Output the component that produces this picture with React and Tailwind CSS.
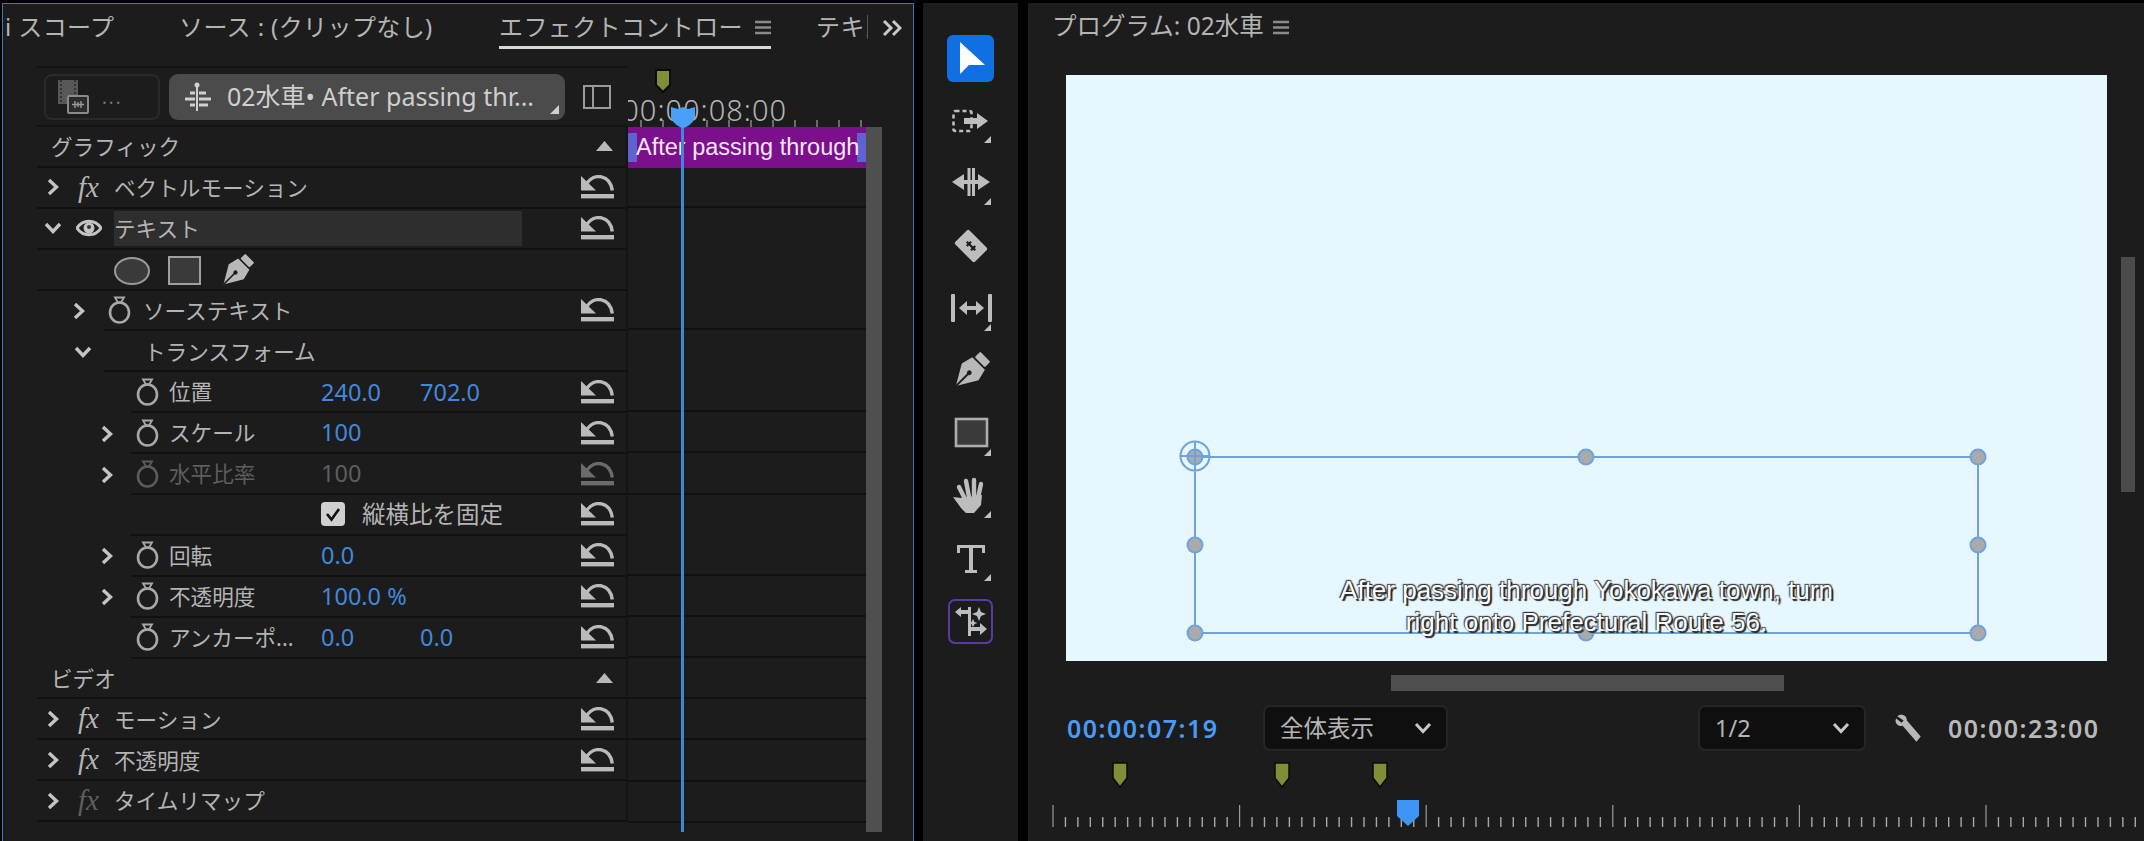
import React from 'react';

const gray = '#bababa';

const Chevron = ({ open = false }) => (
  <svg width="18" height="18" viewBox="0 0 18 18" className="shrink-0">
    <path d={open ? 'M2 5 L9 12.5 L16 5' : 'M5 2 L12.5 9 L5 16'} fill="none" stroke="#c4c4c4" strokeWidth="3.4" />
  </svg>
);

const ResetIcon = ({ dim = false }) => (
  <svg width="33" height="24" viewBox="0 0 33 24" className="shrink-0" opacity={dim ? 0.5 : 1}>
    <path d="M0 1 L0 15.5 L15 15.5 Z" fill={gray} />
    <path d="M6 8 C13 -2 29 -1 31.3 15.5" fill="none" stroke={gray} strokeWidth="3.4" />
    <rect x="0" y="19" width="33" height="4.4" fill={gray} />
  </svg>
);

const Stopwatch = ({ dim = false }) => (
  <svg width="23" height="28" viewBox="0 0 23 28" className="shrink-0" opacity={dim ? 0.45 : 1}>
    <ellipse cx="11.5" cy="16.5" rx="9.5" ry="10" fill="none" stroke="#a8a8a8" strokeWidth="2.6" />
    <path d="M7 1.5 H16 L13 6.5 H10 Z" fill="none" stroke="#a8a8a8" strokeWidth="1.8" />
  </svg>
);

const Fx = ({ dim = false }) => (
  <span className={`w-[38px] shrink-0 font-['Liberation_Serif',serif] italic text-[29px] leading-none ${dim ? 'text-[#5f5f5f]' : 'text-[#b4b4b4]'}`}>fx</span>
);

const Eye = () => (
  <svg width="26" height="18" viewBox="0 0 26 18" className="mr-[12px] shrink-0">
    <path d="M1 9 C7 0 19 0 25 9 C19 18 7 18 1 9 Z" fill="none" stroke="#c4c4c4" strokeWidth="3" />
    <circle cx="13" cy="9" r="5.5" fill="#c4c4c4" />
    <circle cx="13" cy="8" r="2" fill="#333" />
  </svg>
);

const Triangle = () => (
  <svg width="17" height="10" viewBox="0 0 17 10" className="shrink-0">
    <path d="M8.5 0 L17 10 L0 10 Z" fill="#b8b8b8" />
  </svg>
);

const Menu = () => (
  <svg width="16" height="15" viewBox="0 0 16 15" className="shrink-0">
    <path d="M0 2 H16 M0 7.5 H16 M0 13 H16" stroke="#8a8a8a" strokeWidth="2.4" />
  </svg>
);

const PenShape = ({ size = 34 }) => (
  <svg width={size} height={size} viewBox="0 0 32 32" className="shrink-0">
    <g transform="rotate(45 16 16)">
      <rect x="10" y="-1" width="12" height="6.5" rx="1" fill="#b8b8b8" />
      <path d="M8.5 7 H23.5 L26 17 L16 34 L6 17 Z" fill="#b8b8b8" />
      <path d="M16 19 V34" stroke="#1c1c1c" strokeWidth="1.6" />
      <circle cx="16" cy="18" r="2" fill="#1c1c1c" />
    </g>
  </svg>
);

// one line of the effect list; the gutter sits left of the separator
const Row = ({ gutter, reset, dim, children }) => (
  <div className="flex h-[40.9px]">
    {gutter}
    <div className="flex flex-1 items-center border-b-2 border-[#111111]">
      {children}
      {reset && (
        <div className="ml-auto mr-[12px]">
          <ResetIcon dim={dim} />
        </div>
      )}
    </div>
  </div>
);

const Gutter1 = ({ open }) => (
  <div className={`flex w-[67px] shrink-0 items-center ${open ? 'pl-[37px]' : 'pl-[33px]'}`}>
    <Chevron open={open} />
  </div>
);

const Gutter2 = ({ show = true }) => (
  <div className="flex w-[94px] shrink-0 items-center pl-[61px]">{show && <Chevron />}</div>
);

const Label = ({ children, dim, className = '' }) => (
  <span className={`whitespace-nowrap pt-px text-[21.6px] leading-none ${dim ? 'text-[#5e5e5e]' : 'text-[#b4b4b4]'} ${className}`}>{children}</span>
);

const Val = ({ children, dim, className = '' }) => (
  <span className={`whitespace-nowrap pt-px text-[23.5px] leading-none ${dim ? 'text-[#5e5e5e]' : 'text-[#4288dd]'} ${className}`}>{children}</span>
);

const SectionRow = ({ title }) => (
  <Row>
    <Label className="ml-[14px]">{title}</Label>
    <div className="ml-auto mr-[13px]">
      <Triangle />
    </div>
  </Row>
);

const FxRow = ({ title, reset = true, dimFx }) => (
  <Row reset={reset}>
    <div className="flex w-[41px] shrink-0 pl-[7px]">
      <Chevron />
    </div>
    <Fx dim={dimFx} />
    <Label className="-ml-[2px]">{title}</Label>
  </Row>
);

const PropRow = ({ chevron = true, title, dim, v1, v2 }) => (
  <Row gutter={<Gutter2 show={chevron} />} reset dim={dim}>
    <div className="ml-[5px] flex items-center">
      <Stopwatch dim={dim} />
    </div>
    <Label dim={dim} className="ml-[10px] w-[152px]">{title}</Label>
    {v1 && <Val dim={dim} className="w-[99px]">{v1}</Val>}
    {v2 && <Val>{v2}</Val>}
  </Row>
);

const EffectList = () => (
  <div className="w-[591px] shrink-0 border-r-2 border-[#141414]">
    <SectionRow title="グラフィック" />
    <FxRow title="ベクトルモーション" />
    <Row reset>
      <div className="flex w-[39px] shrink-0 pl-[7px]">
        <Chevron open />
      </div>
      <Eye />
      <div className="flex h-[35px] w-[408px] items-center bg-[#2e2e2e]">
        <Label>テキスト</Label>
      </div>
    </Row>
    <Row>
      <div className="ml-[77px] mt-[3px] flex items-center">
        <div className="h-[28px] w-[36px] rounded-[50%] border-[2.5px] border-[#9a9a9a] bg-[#3a3a3a]" />
        <div className="ml-[18px] h-[29px] w-[33px] border-[2.5px] border-[#a0a0a0] bg-[#3a3a3a]" />
        <div className="ml-[19px]">
          <PenShape />
        </div>
      </div>
    </Row>
    <Row gutter={<Gutter1 />} reset>
      <div className="ml-[4px] flex items-center">
        <Stopwatch />
      </div>
      <Label className="ml-[12px]">ソーステキスト</Label>
    </Row>
    <Row gutter={<Gutter1 open />}>
      <Label className="ml-[40px]">トランスフォーム</Label>
    </Row>
    <PropRow chevron={false} title="位置" v1="240.0" v2="702.0" />
    <PropRow title="スケール" v1="100" />
    <PropRow title="水平比率" v1="100" dim />
    <Row gutter={<Gutter2 show={false} />} reset>
      <div className="ml-[190px] flex h-[24px] w-[24px] items-center justify-center rounded-[4px] bg-[#cfcfcf]">
        <svg width="16" height="15" viewBox="0 0 16 15">
          <path d="M2 7 L6.5 12.5 L14 2" fill="none" stroke="#111" strokeWidth="2.6" />
        </svg>
      </div>
      <span className="ml-[17px] whitespace-nowrap text-[23.5px] leading-none text-[#b4b4b4]">縦横比を固定</span>
    </Row>
    <PropRow title="回転" v1="0.0" />
    <PropRow title="不透明度" v1="100.0 %" />
    <PropRow chevron={false} title="アンカーポ..." v1="0.0" v2="0.0" />
    <SectionRow title="ビデオ" />
    <FxRow title="モーション" />
    <FxRow title="不透明度" />
    <FxRow title="タイムリマップ" reset={false} dimFx />
  </div>
);

const laneHeights = ['h-[40px]', 'h-[122px]', 'h-[82px]', 'h-[41px]', 'h-[42px]', 'h-[81px]', 'h-[41px]', 'h-[41px]', 'h-[41px]', 'h-[41px]', 'h-[42px]', 'h-[41px]'];

const Lanes = () => (
  <div className="relative w-[238px] shrink-0">
    <div className="relative flex h-[41px] items-center overflow-hidden bg-[#7b0f8c]">
      <div className="absolute left-0 top-[6px] h-[29px] w-[9px] bg-[#5f63cf]" />
      <div className="absolute right-0 top-[6px] h-[29px] w-[9px] bg-[#5f63cf]" />
      <span className="relative ml-[8px] whitespace-nowrap font-['Liberation_Sans',sans-serif] text-[23.5px] leading-none text-[#f4e6f6]">After passing through</span>
    </div>
    {laneHeights.map((h, i) => (
      <div key={i} className={`${h} border-b-2 border-[#111111]`} />
    ))}
  </div>
);

const Tabs = () => (
  <div className="flex h-[62px] items-start text-[24px] leading-none tracking-[0.4px] text-[#b4b4b4]">
    <span className="mt-[11px] w-[176px] whitespace-nowrap pl-[2px]">i スコープ</span>
    <span className="mt-[11px] w-[320px] whitespace-nowrap">ソース : (クリップなし)</span>
    <div className="flex h-[45px] w-[272px] items-start border-b-[3px] border-[#d8d8d8] pt-[11px]">
      <span className="w-[245px] overflow-hidden whitespace-nowrap">エフェクトコントロール</span>
      <div className="ml-[12px] mt-[5px]">
        <Menu />
      </div>
    </div>
    <span className="ml-[45px] mt-[11px] w-[52px] overflow-hidden whitespace-nowrap border-r border-[#555]">テキスト</span>
    <svg width="20" height="18" viewBox="0 0 20 18" className="ml-[14px] mt-[15px]">
      <path d="M2 2 L9 9 L2 16 M11 2 L18 9 L11 16" fill="none" stroke="#c8c8c8" strokeWidth="3" />
    </svg>
  </div>
);

const ChipHeader = () => (
  <div className="flex h-[61px] w-[591px] shrink-0 items-center border-y-2 border-[#141414] pl-[7px]">
    <div className="flex h-[46px] w-[116px] items-center rounded-[8px] border-2 border-[#2a2a2a] pl-[11px]">
      <svg width="32" height="36" viewBox="0 0 32 36">
        <rect x="1" y="1" width="20" height="24" fill="#585858" />
        <path d="M4 1 V25 M18 1 V25" stroke="#2a2a2a" strokeWidth="1.5" strokeDasharray="2 2" />
        <rect x="11" y="17" width="20" height="17" rx="1" fill="#2b2b2b" stroke="#8a8a8a" strokeWidth="2" />
        <path d="M15 25.5 H27 M18 22 V29 M21 23 V28 M24 22 V29" stroke="#9a9a9a" strokeWidth="1.4" />
      </svg>
      <span className="ml-[13px] text-[18px] leading-none tracking-[2px] text-[#777]">...</span>
    </div>
    <div className="relative ml-[9px] flex h-[46px] w-[396px] items-center rounded-[9px] bg-[#4b4b4b] pl-[15px]">
      <svg width="28" height="30" viewBox="0 0 28 30">
        <path d="M13 3 V29" stroke="#d0d0d0" strokeWidth="2" />
        <circle cx="13" cy="3" r="2.5" fill="#d0d0d0" />
        <path d="M6 11 H11 M15 11 H22 M1 17 H11 M15 17 H27 M6 23 H11 M15 23 H24" stroke="#d0d0d0" strokeWidth="3" />
      </svg>
      <span className="ml-[15px] whitespace-nowrap text-[25px] leading-none text-[#cfcfcf]">02水車• After passing thr...</span>
      <svg width="9" height="9" viewBox="0 0 9 9" className="absolute bottom-[6px] right-[6px]">
        <path d="M9 0 V9 H0 Z" fill="#d0d0d0" />
      </svg>
    </div>
    <div className="ml-[18px] flex h-[24px] w-[28px] border-2 border-[#9a9a9a]">
      <div className="w-[9px] border-r-2 border-[#9a9a9a]" />
    </div>
  </div>
);

const timelineTicks = Array.from({ length: 11 }, (_, i) => 13 + i * 22);

const TimelineHeader = () => (
  <div className="relative h-[61px] w-[238px] overflow-hidden">
    <span className="absolute bottom-[3px] right-[79px] whitespace-nowrap text-[29px] font-light leading-none tracking-[1px] text-[#b4b4b4]">00:00:08:00</span>
    <svg width="238" height="8" viewBox="0 0 238 8" className="absolute bottom-0 left-0">
      {timelineTicks.map((x) => (
        <path key={x} d={`M${x} 1 V8`} stroke="#8f8f8f" strokeWidth="1.4" />
      ))}
    </svg>
  </div>
);

const Corner = () => <path d="M44 39 V46 H37 Z" fill="#c0c0c0" />;

const icon = (children) => (
  <svg width="48" height="48" viewBox="0 0 48 48">
    {children}
  </svg>
);

const toolIcons = [
  <div key="select" className="flex h-[47px] w-[47px] items-center justify-center rounded-[6px] bg-[#0f6fe3]">
    <svg width="30" height="34" viewBox="0 0 30 34">
      <path d="M4 1 L29 24 L13 24 L4 33 Z" fill="#ffffff" />
    </svg>
  </div>,
  icon(
    <g key="track">
      <rect x="6.5" y="14" width="18" height="20" rx="2" fill="none" stroke="#bdbdbd" strokeWidth="2.6" strokeDasharray="4 3" />
      <path d="M17 21 H30 V16 L41 24 L30 32 V27 H17 Z" fill="#bdbdbd" />
      <Corner />
    </g>
  ),
  icon(
    <g key="ripple">
      <path d="M5 23 L17 15 V21 H31 V15 L43 23 L31 31 V25 H17 V31 Z" fill="#bdbdbd" />
      <rect x="20.5" y="9" width="3" height="28" fill="#bdbdbd" />
      <rect x="25" y="9" width="3" height="28" fill="#bdbdbd" />
      <Corner />
    </g>
  ),
  icon(
    <g key="razor" transform="rotate(45 24 24)">
      <rect x="10" y="14" width="28" height="20" rx="2" fill="#bdbdbd" />
      <path d="M18 24 H30 M21 21 V27 M27 21 V27" stroke="#1c1c1c" strokeWidth="2.2" />
    </g>
  ),
  icon(
    <g key="slip">
      <rect x="4" y="9" width="4" height="28" rx="1" fill="#bdbdbd" />
      <rect x="41" y="9" width="4" height="28" rx="1" fill="#bdbdbd" />
      <path d="M12 23 L20 16 V21 H29 V16 L37 23 L29 30 V25 H20 V30 Z" fill="#bdbdbd" />
      <Corner />
    </g>
  ),
  <PenShape key="pen" size={38} />,
  icon(
    <g key="rect">
      <rect x="9" y="9" width="31" height="27" fill="#3a3a3a" stroke="#adadad" strokeWidth="2.6" />
      <Corner />
    </g>
  ),
  icon(
    <g key="hand">
      <path d="M12 15 L18 27 M19 9 L22 25 M27 8 L27 25 M34 12 L31 26" stroke="#bdbdbd" strokeWidth="4.4" strokeLinecap="round" />
      <path d="M6 25 L15 26 L35 23 L34 33 L27 41 H19 L14 36 Z" fill="#bdbdbd" />
      <Corner />
    </g>
  ),
  icon(
    <g key="type">
      <path d="M10 10 H38 V18 H35 V13 H26 V35 H30 V38 H18 V35 H22 V13 H13 V18 H10 Z" fill="#bdbdbd" />
      <Corner />
    </g>
  ),
  <div key="gen" className="flex h-[45px] w-[45px] items-center justify-center rounded-[7px] border-2 border-[#5b3aa6]">
    <svg width="34" height="32" viewBox="0 0 34 32">
      <path d="M1 6 L7 1 V4 H15 V8 H7 V11 Z M14 1 H17 V30 H14 Z M17 21 H26 V17 L33 23 L26 29 V25 H17 Z" fill="#bdbdbd" />
      <path d="M25 1 L27 6 L32 8 L27 10 L25 15 L23 10 L18 8 L23 6 Z M19 13 L20.5 16 L23.5 17 L20.5 18 L19 21 L17.5 18 L14.5 17 L17.5 16 Z" fill="#bdbdbd" />
    </svg>
  </div>,
];

const Tools = () => (
  <div className="flex w-[95px] shrink-0 flex-col items-center bg-[#1c1c1c] pt-[24px]">
    {toolIcons.map((t, i) => (
      <div key={i} className="flex h-[62.6px] w-full items-center justify-center">
        {t}
      </div>
    ))}
  </div>
);

const handles = [
  [12, 12], [403, 12], [795, 12],
  [12, 100], [795, 100],
  [12, 188], [403, 188], [795, 188],
];

const Dropdown = ({ label, className }) => (
  <div className={`flex h-[46px] items-center justify-between rounded-[7px] border-2 border-[#262626] bg-[#0f0f0f] pl-[15px] pr-[14px] text-[#b4b4b4] ${className}`}>
    <span className="mt-[2px] whitespace-nowrap text-[23.5px] leading-none">{label}</span>
    <svg width="18" height="12" viewBox="0 0 18 12">
      <path d="M2 2 L9 9.5 L16 2" fill="none" stroke="#c8c8c8" strokeWidth="3" />
    </svg>
  </div>
);

const rulerTicks = Array.from({ length: 88 }, (_, i) => 25 + i * 12.44);

const Ruler = () => (
  <svg width="1116" height="81" viewBox="0 0 1116 81" className="mt-[9px] block">
    {[92, 254, 352].map((x) => (
      <path key={x} d={`M${x - 7} 3 H${x + 7} V18 L${x} 27 L${x - 7} 18 Z`} fill="#7f8f38" stroke="#0b0b0b" strokeWidth="1.5" />
    ))}
    {rulerTicks.map((x, i) =>
      i % 15 === 0 ? (
        <path key={x} d={`M${x} 45 V67`} stroke="#9a9a9a" strokeWidth="1.2" />
      ) : (
        <path key={x} d={`M${x} 57 V67`} stroke="#a8a8a8" strokeWidth="1.4" />
      )
    )}
    <path d="M369 40 H391 V56 L380 66 L369 56 Z" fill="#3f95f5" />
  </svg>
);

const Program = () => (
  <div className="flex-1 bg-[#1c1c1c]">
    <div className="flex h-[72px] items-start pl-[24px] pt-[11px]">
      <span className="whitespace-nowrap text-[24.5px] leading-none text-[#b4b4b4]">プログラム: 02水車</span>
      <div className="ml-[9px] mt-[6px]">
        <Menu />
      </div>
    </div>
    <div className="flex">
      <div className="relative ml-[38px] h-[586px] w-[1041px] bg-[#e6f7ff]">
        <svg width="808" height="200" viewBox="0 0 808 200" className="absolute left-[117px] top-[370px] overflow-visible">
          <rect x="12" y="12" width="783" height="176" fill="none" stroke="#6ea3dc" strokeWidth="2" />
          {handles.map(([x, y]) => (
            <circle key={`${x}-${y}`} cx={x} cy={y} r="7.5" fill="#aaaaaa" stroke="#6ea3dc" strokeWidth="2" />
          ))}
          <circle cx="12" cy="11" r="14.5" fill="none" stroke="#6ea3dc" strokeWidth="2" />
          <path d="M-3 11 H27 M12 -4 V26" stroke="#6ea3dc" strokeWidth="2" />
        </svg>
        <div className="absolute left-[129px] top-[499px] w-[783px] text-center font-['Liberation_Sans',sans-serif] text-[26px] leading-[32px] text-white [text-shadow:2px_2px_1px_#222,-1px_-1px_1px_#333,1px_-1px_1px_#444]">
          After passing through Yokokawa town, turn
          <br />
          right onto Prefectural Route 56.
        </div>
      </div>
      <div className="ml-[14px] mt-[182px] h-[235px] w-[14px] bg-[#4b4b4b]" />
    </div>
    <div className="ml-[363px] mt-[14px] h-[16px] w-[393px] bg-[#4f4f4f]" />
    <div className="mt-[14px] flex items-center">
      <span className="ml-[39px] w-[196px] whitespace-nowrap text-[25px] font-semibold leading-none tracking-[1.5px] text-[#4a9af5]">00:00:07:19</span>
      <Dropdown label="全体表示" className="w-[185px]" />
      <Dropdown label="1/2" className="ml-[250px] w-[168px]" />
      <svg width="32" height="32" viewBox="0 0 30 30" className="ml-[27px]">
        <path d="M4 4 C8 1 13 3 13 8 L26 23 L22 28 L9 13 C4 14 1 9 3 6 L8 10 L10 8 Z" fill="#b8b8b8" />
      </svg>
      <span className="ml-[23px] whitespace-nowrap text-[25px] font-semibold leading-none tracking-[1.5px] text-[#b8b8b8]">00:00:23:00</span>
    </div>
    <Ruler />
  </div>
);

export default function App() {
  return (
    <div className="flex h-[841px] w-[2144px] overflow-hidden bg-black pt-[3px] font-['Noto_Sans','Noto_Sans_CJK_JP',sans-serif]">
      <div className="ml-[2px] w-[912px] shrink-0 border-x border-t border-[#3a78bd] bg-[#1c1c1c]">
        <Tabs />
        <div className="relative ml-[34px] flex">
          <div>
            <ChipHeader />
            <EffectList />
          </div>
          <div>
            <TimelineHeader />
            <Lanes />
          </div>
          <div className="mt-[61px] h-[705px] w-[16px] bg-[#4f4f4f]" />
          {/* marker and playhead lie over the clip */}
          <svg width="18" height="26" viewBox="0 0 18 26" className="absolute left-[617px] top-[2px]">
            <path d="M2 2 H16 V17 L9 24 L2 17 Z" fill="#7f8f38" stroke="#0b0b0b" strokeWidth="2" />
          </svg>
          <div className="absolute bottom-0 left-[644px] top-[61px] w-[3px] bg-[#3f87d9]" />
          <svg width="24" height="22" viewBox="0 0 24 22" className="absolute left-[634px] top-[40px]">
            <path d="M0 1 L7 3 L12 1 L17 3 L24 1 V12 Q20 20 12 22 Q4 20 0 12 Z" fill="#4aa0f7" />
          </svg>
        </div>
      </div>
      <div className="w-[9px] shrink-0" />
      <Tools />
      <div className="w-[10px] shrink-0" />
      <Program />
    </div>
  );
}
